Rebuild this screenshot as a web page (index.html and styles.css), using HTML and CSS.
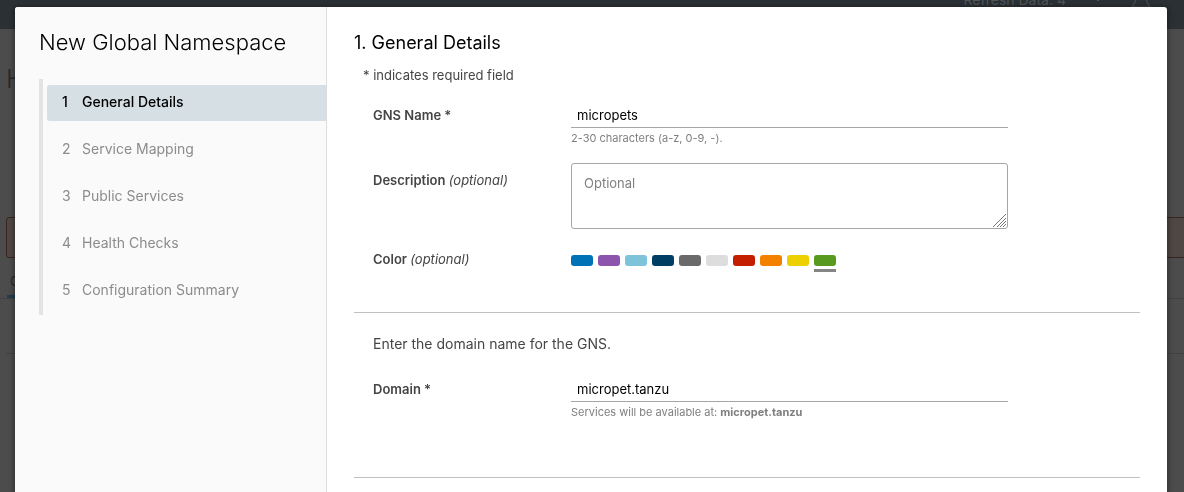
FILE: index.html
```html
<!DOCTYPE html>
<html lang="en">
<head>
<meta charset="utf-8">
<title>New Global Namespace</title>
<link rel="stylesheet" href="styles.css">
</head>
<body>
<div class="page" aria-hidden="true">
  <div class="topbar">
    <span class="refresh">Refresh Data: 4</span>
    <span class="caret"></span>
    <svg class="bell" width="22" height="20" viewBox="0 0 22 20" fill="none" stroke="currentColor"><path d="M7 1C5 3 6 8 5 11L2 16H20L17 11C16 8 17 3 15 1"/></svg>
  </div>
  <div class="page-title">Home</div>
  <div class="alert"></div>
  <div class="tabs"><span class="tab">GNS</span></div>
  <div class="page-rule"></div>
</div>

<div class="modal" role="dialog" aria-labelledby="wizard-title">
  <aside class="sidebar">
    <h1 class="wizard-title" id="wizard-title">New Global Namespace</h1>
    <nav class="steps">
      <button class="step step-active" type="button" aria-current="step"><span class="step-number">1</span>General Details</button>
      <button class="step" type="button"><span class="step-number">2</span>Service Mapping</button>
      <button class="step" type="button"><span class="step-number">3</span>Public Services</button>
      <button class="step" type="button"><span class="step-number">4</span>Health Checks</button>
      <button class="step" type="button"><span class="step-number">5</span>Configuration Summary</button>
    </nav>
  </aside>
  <main class="content">
    <h2 class="content-title">1. General Details</h2>
    <p class="required-note">* indicates required field</p>
    <form>
      <section class="section">
        <div class="row">
          <label class="label" for="gns-name">GNS Name *</label>
          <div>
            <input class="text-input" id="gns-name" type="text" value="micropets">
            <p class="hint">2-30 characters (a-z, 0-9, -).</p>
          </div>
        </div>
        <div class="row row-description">
          <label class="label" for="description">Description <em class="optional">(optional)</em></label>
          <div class="area-wrap">
            <textarea class="area" id="description" placeholder="Optional"></textarea>
            <svg class="grip" width="13" height="13" viewBox="0 0 13 13" stroke="currentColor"><path d="M0 13L13 0M4 13L13 4M7 13L13 7M10 13L13 10"/></svg>
          </div>
        </div>
        <div class="row row-color" role="radiogroup" aria-labelledby="color-label">
          <span class="label" id="color-label">Color <em class="optional">(optional)</em></span>
          <div class="swatches">
            <label class="swatch"><input class="chip blue" type="radio" name="color" aria-label="Blue"></label>
            <label class="swatch"><input class="chip purple" type="radio" name="color" aria-label="Purple"></label>
            <label class="swatch"><input class="chip sky" type="radio" name="color" aria-label="Light blue"></label>
            <label class="swatch"><input class="chip navy" type="radio" name="color" aria-label="Navy"></label>
            <label class="swatch"><input class="chip gray" type="radio" name="color" aria-label="Gray"></label>
            <label class="swatch"><input class="chip silver" type="radio" name="color" aria-label="Light gray"></label>
            <label class="swatch"><input class="chip red" type="radio" name="color" aria-label="Red"></label>
            <label class="swatch"><input class="chip orange" type="radio" name="color" aria-label="Orange"></label>
            <label class="swatch"><input class="chip yellow" type="radio" name="color" aria-label="Yellow"></label>
            <label class="swatch"><input class="chip green" type="radio" name="color" aria-label="Green" checked></label>
          </div>
        </div>
      </section>
      <section class="section section-domain">
        <p class="intro">Enter the domain name for the GNS.</p>
        <div class="row">
          <label class="label" for="domain">Domain *</label>
          <div>
            <input class="text-input" id="domain" type="text" value="micropet.tanzu">
            <p class="hint">Services will be available at: <strong>micropet.tanzu</strong></p>
          </div>
        </div>
      </section>
    </form>
  </main>
</div>
</body>
</html>
```

FILE: styles.css
```css
* {
  box-sizing: border-box;
}

body {
  margin: 0;
  overflow: hidden;
  background: #4c4c4c;
  color: #454545;
  font-family: Inter, "Liberation Sans", sans-serif;
  font-size: 13px;
  line-height: 20px;
}

h1, h2, p {
  margin: 0;
  font-weight: 400;
}

button, input, textarea {
  font: inherit;
}

/* Dimmed page behind the dialog */
.page {
  color: #292929;
}

.topbar {
  display: flex;
  align-items: flex-end;
  justify-content: flex-end;
  gap: 31px;
  height: 29px;
  padding: 0 32px 19px 0;
  background: #2a3034;
  color: #505558;
  font-size: 14px;
}

.caret {
  width: 2px;
  height: 2px;
  margin-bottom: 9px;
  background: #505558;
}

.bell {
  flex: none;
  margin-bottom: -1px;
}

.page-title {
  padding: 34px 6px 0;
  font-size: 26px;
  font-weight: 300;
  line-height: 32px;
}

.alert {
  height: 41px;
  margin: 122px -6px 0 6px;
  border: 1px solid #39241f;
  border-radius: 3px;
  background: #4e4744;
}

.tabs {
  display: flex;
  height: 41px;
  padding-left: 7px;
  border-bottom: 1px solid #414141;
}

.tab {
  padding: 13px 3px 0;
  border-bottom: 3px solid #203e4d;
}

.page-rule {
  height: 55px;
  margin-left: 6px;
  border-bottom: 1px solid #414141;
}

.modal {
  position: fixed;
  inset: 7px 17px 0 15px;
  display: flex;
  overflow: hidden;
  border-radius: 3px 3px 0 0;
  background: #fff;
  box-shadow: 0 1px 4px 2px rgba(0, 0, 0, 0.3);
}

.sidebar {
  flex: none;
  width: 312px;
  padding: 19px 0 0 24px;
  border-right: 1px solid #ddd;
  background: #fafafa;
}

.wizard-title {
  color: #000;
  font-size: 22px;
  font-weight: 300;
  line-height: 32px;
}

.steps {
  display: flex;
  flex-direction: column;
  gap: 11px;
  margin-top: 21px;
  padding: 6px 0 6px 4px;
  border-left: 4px solid #e3e3e3;
}

.step {
  display: flex;
  align-items: center;
  height: 36px;
  padding: 0 15px 2px;
  border: 0;
  border-radius: 3px 0 0 3px;
  background: none;
  color: #8c8c8c;
  font-size: 14px;
  text-align: left;
}

.step-active {
  background: #d5dfe4;
  color: #000;
  font-weight: 500;
}

.step-number {
  width: 20px;
}

.content {
  flex: 1;
  padding: 24px 27px 0;
}

.content-title {
  color: #000;
  font-size: 18px;
  line-height: 24px;
}

.required-note {
  padding: 10px 0 0 9px;
}

.section {
  padding: 20px 132px 0 19px;
  border-bottom: 1px solid #c1c1c1;
}

.row {
  display: grid;
  grid-template-columns: 198px 1fr;
}

.label {
  font-weight: 600;
}

.optional {
  font-weight: 400;
}

.text-input {
  display: block;
  width: 100%;
  height: 23px;
  padding: 0 6px 3px;
  border: 0;
  border-bottom: 1px solid #a6a6a6;
  background: none;
  color: #000;
}

.hint {
  color: #7f7f7f;
  font-size: 11px;
}

.row-description {
  margin-top: 15px;
}

.row-description .label {
  padding-top: 7px;
}

.area-wrap {
  position: relative;
}

.area {
  display: block;
  width: 100%;
  height: 66px;
  padding: 9px 12px;
  border: 1px solid #a6a6a6;
  border-radius: 3px;
  color: #000;
  resize: none;
}

.area::placeholder {
  color: #808080;
}

.grip {
  position: absolute;
  right: 2px;
  bottom: 2px;
  color: #777;
  pointer-events: none;
}

.row-color {
  margin-top: 20px;
  padding-bottom: 40px;
}

.swatches {
  display: flex;
  align-items: flex-start;
  gap: 5px;
  padding-top: 6px;
}

.swatch {
  padding-bottom: 3px;
}

.swatch:has(:checked) {
  border-bottom: 3px solid #858585;
}

.chip {
  display: block;
  width: 22px;
  height: 11px;
  margin: 0;
  border-radius: 3px;
  appearance: none;
}

.blue { background: #0072b5; }
.purple { background: #8c54ad; }
.sky { background: #7dc3da; }
.navy { background: #003f63; }
.gray { background: #6a6a6a; }
.silver { background: #ddd; }
.red { background: #c31f00; }
.orange { background: #f48000; }
.yellow { background: #edd000; }
.green { background: #589a1d; }

.section-domain {
  padding-top: 21px;
  padding-bottom: 55px;
}

.intro {
  margin-bottom: 25px;
  font-size: 14px;
}
```
